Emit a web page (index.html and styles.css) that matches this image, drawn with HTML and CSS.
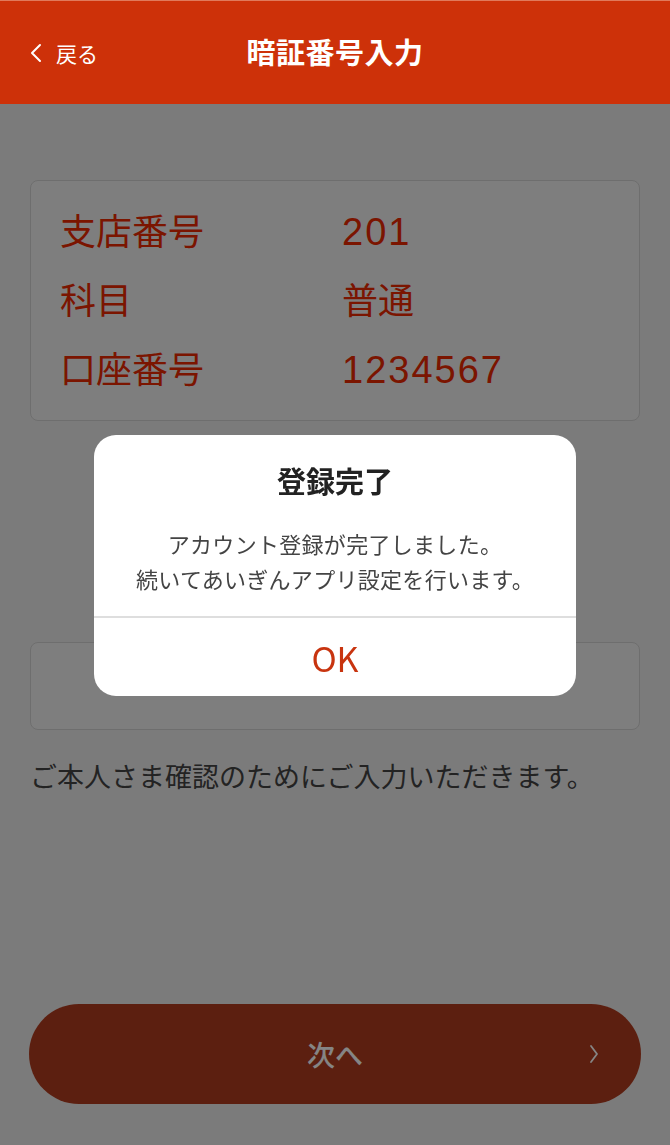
FILE: index.html
```html
<!DOCTYPE html>
<html lang="ja">
<head>
    <meta charset="utf-8">
    <title>暗証番号入力</title>
    <meta name="viewport" content="width=device-width, initial-scale=1">
    <link rel="stylesheet" href="styles.css">
</head>
<body>
    <header class="topBar">
        <button class="backButton">
            <svg class="backIcon" viewBox="0 0 12 20" width="12" height="20"><path d="M10 2 L2 10 L10 18" fill="none" stroke="#fff" stroke-width="2" stroke-linecap="round" stroke-linejoin="round"/></svg>
            <span>戻る</span>
        </button>
        <h1>暗証番号入力</h1>
    </header>
    <main class="content">
        <div class="infoCard">
            <div class="infoRow"><span class="infoLabel">支店番号</span><span class="infoValue digits">201</span></div>
            <div class="infoRow"><span class="infoLabel">科目</span><span class="infoValue">普通</span></div>
            <div class="infoRow"><span class="infoLabel">口座番号</span><span class="infoValue digits">1234567</span></div>
        </div>
        <div class="pinSpace"></div>
        <div class="pinBox"></div>
        <p class="note">ご本人さま確認のためにご入力いただきます。</p>
    </main>
    <div class="bottomArea">
        <button class="nextButton">
            <span>次へ</span>
            <svg class="nextIcon" viewBox="0 0 10 20" width="10" height="20"><path d="M2 2 L8 10 L2 18" fill="none" stroke="#fff" stroke-width="1.8" stroke-linecap="round" stroke-linejoin="round"/></svg>
        </button>
    </div>
    <div class="backdrop">
        <div class="dialog">
            <h2>登録完了</h2>
            <p class="dialogText">アカウント登録が完了しました。<br>続いてあいぎんアプリ設定を行います。</p>
            <button class="okButton">OK</button>
        </div>
    </div>
</body>
</html>
```

FILE: styles.css
```css
body{
    font-family: "Noto Sans CJK JP", "Noto Sans", sans-serif;
    margin: 0;
    padding: 0;
    background-color: #ececec;
    min-height: 100vh;
    display: flex;
    flex-direction: column;
}
button{
    font-family: inherit;
    border: none;
    background: none;
    padding: 0;
    cursor: pointer;
}
.topBar{
    position: relative;
    z-index: 20;
    height: 104px;
    padding-bottom: 4px;
    background-color: #cd3109;
    border-top: 1px solid #e07a5c;
    box-sizing: border-box;
    display: flex;
    align-items: center;
    justify-content: center;
    color: white;
}
.topBar h1{
    margin: 0;
    font-size: 29px;
    font-weight: bold;
    letter-spacing: 0.5px;
}
.backButton{
    position: absolute;
    left: 30px;
    top: 37px;
    display: flex;
    align-items: center;
    gap: 14px;
    color: white;
    font-size: 21px;
}
.content{
    padding: 76px 30px 0;
    display: flex;
    flex-direction: column;
}
.infoCard{
    background-color: #f2f2f2;
    border: 1px solid #d3d3d3;
    border-radius: 8px;
    padding: 14px 29px 18px;
}
.infoRow{
    display: flex;
    height: 69px;
    line-height: 69px;
    align-items: baseline;
    color: #eb2900;
    font-size: 36px;
}
.infoLabel{
    width: 282px;
}
.digits{
    font-family: "Liberation Sans", Arial, sans-serif;
    font-size: 38px;
    letter-spacing: 2px;
}
.pinSpace{
    height: 221px;
}
.pinBox{
    height: 88px;
    background-color: #f2f2f2;
    border: 1px solid #d3d3d3;
    border-radius: 8px;
    box-sizing: border-box;
}
.note{
    margin: 26px 0 0;
    font-size: 27px;
    line-height: 40px;
    color: #444;
}
.bottomArea{
    margin-top: auto;
    padding: 0 29px 41px;
}
.nextButton{
    position: relative;
    width: 100%;
    height: 100px;
    border-radius: 50px;
    background-color: #b13c1f;
    color: white;
    font-size: 28px;
    font-weight: 500;
    display: flex;
    align-items: center;
    justify-content: center;
}
.nextIcon{
    position: absolute;
    right: 42px;
    top: 40px;
}
.backdrop{
    position: fixed;
    inset: 0;
    z-index: 10;
    background-color: rgba(0, 0, 0, 0.48);
    display: flex;
    justify-content: center;
    align-items: center;
    padding-bottom: 14px;
    box-sizing: border-box;
}
.dialog{
    width: 482px;
    background-color: white;
    border-radius: 22px;
    text-align: center;
    overflow: hidden;
}
.dialog h2{
    margin: 0;
    padding-top: 25px;
    font-size: 29px;
    line-height: 40px;
    font-weight: bold;
    color: #222;
}
.dialogText{
    margin: 26px 0 0;
    padding-bottom: 20px;
    font-size: 22px;
    line-height: 35px;
    letter-spacing: 0.3px;
    color: #444;
    border-bottom: 2px solid #dedede;
}
.okButton{
    width: 100%;
    height: 78px;
    font-size: 34px;
    color: #c8340f;
}
```
